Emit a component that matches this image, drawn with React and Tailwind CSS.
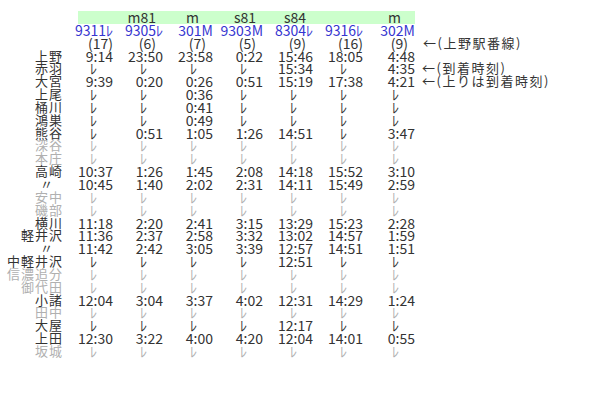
import React from 'react';

const trains = [
    { no: '9311ﾚ', tag: '', track: '(17)' },
    { no: '9305ﾚ', tag: 'm81', track: '(6)' },
    { no: '301M', tag: 'm', track: '(7)' },
    { no: '9303M', tag: 's81', track: '(5)' },
    { no: '8304ﾚ', tag: 's84', track: '(9)' },
    { no: '9316ﾚ', tag: '', track: '(16)' },
    { no: '302M', tag: 'm', track: '(9)' },
];

const ALL_L = 'ﾚ ﾚ ﾚ ﾚ ﾚ ﾚ ﾚ';

// station, times (space separated), dimmed, note
const rows = [
    { st: '上野', t: '9:14 23:50 23:58 0:22 15:46 18:05 4:48' },
    { st: '赤羽', t: 'ﾚ ﾚ ﾚ ﾚ 15:34 ﾚ 4:35', note: '←(到着時刻)' },
    { st: '大宮', t: '9:39 0:20 0:26 0:51 15:19 17:38 4:21', note: '←(上りは到着時刻)' },
    { st: '上尾', t: 'ﾚ ﾚ 0:36 ﾚ ﾚ ﾚ ﾚ' },
    { st: '桶川', t: 'ﾚ ﾚ 0:41 ﾚ ﾚ ﾚ ﾚ' },
    { st: '鴻巣', t: 'ﾚ ﾚ 0:49 ﾚ ﾚ ﾚ ﾚ' },
    { st: '熊谷', t: 'ﾚ 0:51 1:05 1:26 14:51 ﾚ 3:47' },
    { st: '深谷', t: ALL_L, dim: true },
    { st: '本庄', t: ALL_L, dim: true },
    { st: '高崎', t: '10:37 1:26 1:45 2:08 14:18 15:52 3:10' },
    { st: '〃', t: '10:45 1:40 2:02 2:31 14:11 15:49 2:59' },
    { st: '安中', t: ALL_L, dim: true },
    { st: '磯部', t: ALL_L, dim: true },
    { st: '横川', t: '11:18 2:20 2:41 3:15 13:29 15:23 2:28' },
    { st: '軽井沢', t: '11:36 2:37 2:58 3:32 13:02 14:57 1:59' },
    { st: '〃', t: '11:42 2:42 3:05 3:39 12:57 14:51 1:51' },
    { st: '中軽井沢', t: 'ﾚ ﾚ ﾚ ﾚ 12:51 ﾚ ﾚ' },
    { st: '信濃追分', t: ALL_L, dim: true },
    { st: '御代田', t: ALL_L, dim: true },
    { st: '小諸', t: '12:04 3:04 3:37 4:02 12:31 14:29 1:24' },
    { st: '田中', t: ALL_L, dim: true },
    { st: '大屋', t: 'ﾚ ﾚ ﾚ ﾚ 12:17 ﾚ ﾚ' },
    { st: '上田', t: '12:30 3:22 4:00 4:20 12:04 14:01 0:55' },
    { st: '坂城', t: ALL_L, dim: true },
];

export default function App() {
    return (
        <div className="w-[600px] h-[400px] overflow-hidden bg-white pt-[11px] font-['Noto_Sans_CJK_JP',sans-serif] text-[14px] leading-[12.85px] text-[#333]">
            <div className="grid grid-cols-[63px_50px_50px_50px_50px_50px_50px_52px_1fr] auto-rows-[12.85px]">
                {/* header band */}
                <div />
                {trains.map((tr, i) => (
                    <div
                        key={'tag' + i}
                        className={`bg-[#ccffcc] text-right ${i === 0 ? 'ml-[15px]' : ''} ${tr.tag.length === 1 ? 'pr-[14px]' : 'pr-[7px]'}`}
                    >
                        {tr.tag}
                    </div>
                ))}
                <div />

                {/* train numbers */}
                <div />
                {trains.map((tr, i) => (
                    <div key={'no' + i} className="text-right text-[#3535d0]">{tr.no}</div>
                ))}
                <div />

                {/* tracks at Ueno */}
                <div />
                {trains.map((tr, i) => (
                    <div key={'tk' + i} className={`text-right ${tr.track.length === 3 ? 'pr-[7px]' : ''}`}>{tr.track}</div>
                ))}
                <div className="pl-[8px] whitespace-nowrap text-[13px] tracking-[1.5px]">←(上野駅番線)</div>

                {rows.map((r, ri) => (
                    <React.Fragment key={ri}>
                        <div className={`text-right whitespace-nowrap text-[13px] tracking-[1px] ${r.dim ? 'text-[#b0b0b0]' : ''} ${r.st === '〃' ? 'pr-[9px]' : ''}`}>
                            {r.st}
                        </div>
                        {r.t.split(' ').map((v, ci) => (
                            <div
                                key={ci}
                                className={`text-right ${v === 'ﾚ' ? 'pr-4' : ''} ${r.dim ? 'text-[#b0b0b0]' : ''}`}
                            >
                                {v}
                            </div>
                        ))}
                        <div className="pl-[7px] whitespace-nowrap text-[13px] tracking-[1.5px]">{r.note}</div>
                    </React.Fragment>
                ))}
            </div>
        </div>
    );
}
